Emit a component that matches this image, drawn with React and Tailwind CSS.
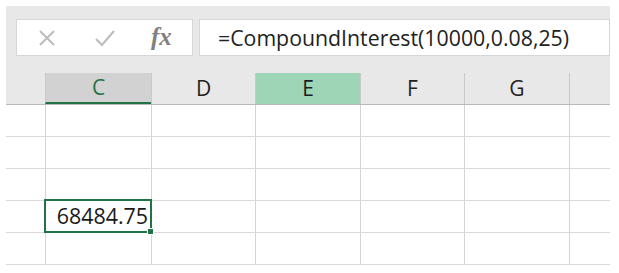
export default function App() {
  const font = { fontFamily: '"Open Sans", "Liberation Sans", sans-serif' };
  const cols = ["", "C", "D", "E", "F", "G", ""];
  const rows = [0, 1, 2, 3, 4];
  return (
    <div className="w-[619px] h-[273px] bg-white overflow-hidden" style={font}>
      <div className="ml-[6px] mt-[6px] w-[604px]">
        {/* toolbar */}
        <div className="h-[67px] bg-[#e8e8e8] flex items-start pt-[13px] pl-[10px]">
          <div className="w-[177px] h-[37px] bg-white border border-[#d6d6d6] flex items-center">
            <div className="w-[28px] ml-[16px] flex justify-center">
              <svg width="20" height="20" viewBox="0 0 20 20">
                <path d="M3 3 L17 17 M17 3 L3 17" stroke="#bdbdbd" strokeWidth="2" fill="none" />
              </svg>
            </div>
            <div className="w-[28px] ml-[30px] flex justify-center">
              <svg width="22" height="20" viewBox="0 0 22 20">
                <path d="M2 11 L8 17 L20 3" stroke="#bdbdbd" strokeWidth="2.2" fill="none" />
              </svg>
            </div>
            <div
              className="ml-[32px] text-[25px] italic font-bold text-[#808080] leading-none pb-[2px]"
              style={{ fontFamily: '"Liberation Serif", "DejaVu Serif", serif' }}
            >
              fx
            </div>
          </div>
          <div className="ml-[6px] w-[411px] h-[37px] bg-white border border-[#d6d6d6] flex items-center pl-[18px] text-[21.3px] text-[#222] leading-none">
            =CompoundInterest(10000,0.08,25)
          </div>
        </div>
        {/* header row */}
        <div className="grid grid-cols-[39px_106px_104px_105px_104px_105px_41px] h-[32px] bg-[#e8e8e8] border-b border-[#b8b8b8]">
          {cols.map((c, i) => (
            <div
              key={i}
              className={
                "flex items-center justify-center text-[21px] leading-none " +
                (i > 0 ? "border-l border-[#c8c8c8] " : "") +
                (c === "C"
                  ? "bg-[#d2d2d2] text-[#217346] border-b-2 border-b-[#217346]"
                  : c === "E"
                  ? "bg-[#9fd5b7] text-[#1c1c1c]"
                  : "text-[#222]")
              }
            >
              {c}
            </div>
          ))}
        </div>
        {/* body rows */}
        {rows.map((r) => (
          <div
            key={r}
            className="grid grid-cols-[39px_106px_104px_105px_104px_105px_41px] h-[32px] border-b border-[#d9d9d9]"
          >
            {cols.map((c, i) => (
              <div
                key={i}
                className={"relative " + (i > 0 ? "border-l border-[#d4d4d4]" : "")}
              >
                {r === 3 && c === "C" && (
                  <div className="absolute left-[-2px] top-[-2px] w-[108px] h-[34px] border-2 border-[#217346] flex items-center justify-end pr-[2px] text-[21.4px] text-[#1a1a1a] leading-none z-10">
                    68484.75
                    <div className="absolute right-[-4px] bottom-[-4px] w-[7px] h-[7px] bg-[#217346] border border-white" />
                  </div>
                )}
              </div>
            ))}
          </div>
        ))}
      </div>
    </div>
  );
}
